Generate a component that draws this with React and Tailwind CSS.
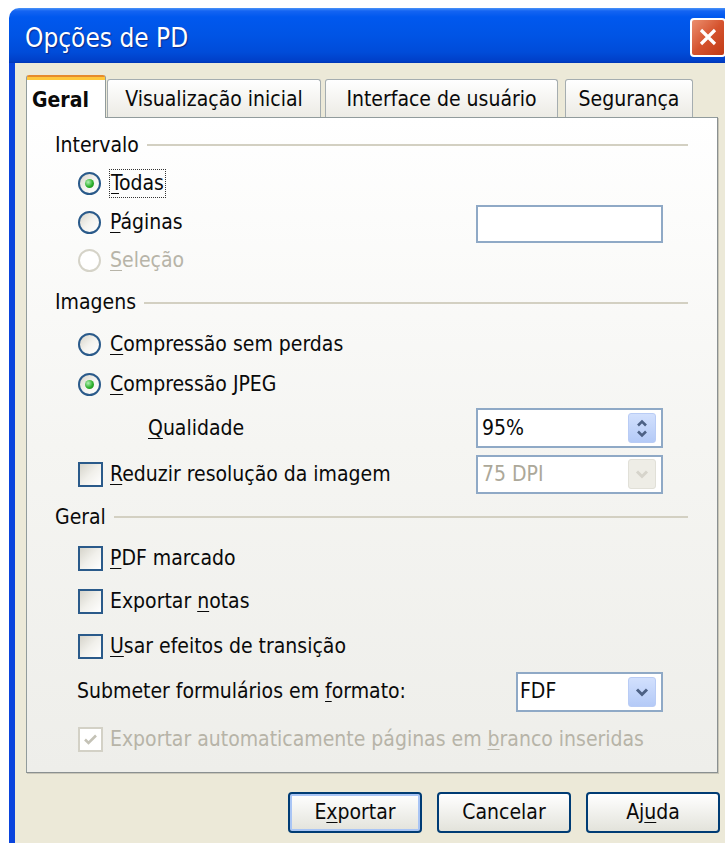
import React from "react";

function Radio({ checked = false, disabled = false }) {
  return (
    <span
      className={
        disabled
          ? "flex h-[23px] w-[23px] shrink-0 items-center justify-center rounded-full border-2 border-[#D5D3C8] bg-white"
          : "flex h-[23px] w-[23px] shrink-0 items-center justify-center rounded-full border-2 border-[#2A5A8A] bg-gradient-to-br from-[#D8D5CA] via-[#F4F3EF] to-white"
      }
    >
      {checked && (
        <span className="h-[9px] w-[9px] rounded-full bg-[radial-gradient(circle_at_35%_35%,#B5F0B5,#2DB12D_55%,#137A13)]" />
      )}
    </span>
  );
}

function Check({ checked = false, disabled = false }) {
  return (
    <span
      className={
        disabled
          ? "flex h-[25px] w-[25px] shrink-0 items-center justify-center border-2 border-[#D3D1C6] bg-white"
          : "flex h-[25px] w-[25px] shrink-0 items-center justify-center border-2 border-[#2A5A8A] bg-gradient-to-br from-[#D6D4CB] via-[#F1F0EB] to-white"
      }
    >
      {checked && (
        <svg width="15" height="15" viewBox="0 0 15 15">
          <path d="M2 7.5 L5.5 11 L13 3.5" fill="none" stroke="#C4C2B6" strokeWidth="2.6" />
        </svg>
      )}
    </span>
  );
}

function Mn({ children }) {
  return <span className="underline decoration-1 underline-offset-[3px]">{children}</span>;
}

function SectionHeader({ label, h }) {
  return (
    <div className={`flex items-center ${h}`}>
      <span>{label}</span>
      <span className="ml-[8px] h-[2px] flex-1 bg-[#D3D0C2]" />
    </div>
  );
}

function ChevronDown({ color }) {
  return (
    <svg width="16" height="12" viewBox="0 0 16 12">
      <path d="M3 3.5 L8 8.5 L13 3.5" fill="none" stroke={color} strokeWidth="3" strokeLinejoin="miter" />
    </svg>
  );
}

function ComboButton({ disabled = false }) {
  return (
    <span
      className={
        disabled
          ? "flex h-[30px] w-[28px] items-center justify-center rounded-[3px] border border-[#E1E0D8] bg-[#EEEDE6]"
          : "flex h-[30px] w-[28px] items-center justify-center rounded-[3px] border border-[#B9CCF5] bg-gradient-to-b from-[#D2E0FD] to-[#B4CAF7]"
      }
    >
      <ChevronDown color={disabled ? "#D6D4CB" : "#4D6185"} />
    </span>
  );
}

function SpinButton() {
  return (
    <span className="flex h-[30px] w-[28px] flex-col items-center justify-center gap-[3px] rounded-[3px] border border-[#B9CCF5] bg-gradient-to-b from-[#D2E0FD] to-[#B4CAF7]">
      <svg width="12" height="8" viewBox="0 0 12 8">
        <path d="M2 6.5 L6 2.5 L10 6.5" fill="none" stroke="#4D6185" strokeWidth="2.6" />
      </svg>
      <svg width="12" height="8" viewBox="0 0 12 8">
        <path d="M2 1.5 L6 5.5 L10 1.5" fill="none" stroke="#4D6185" strokeWidth="2.6" />
      </svg>
    </span>
  );
}

function XpButton({ children, isDefault = false }) {
  return (
    <button
      className={
        isDefault
          ? "flex h-[41px] w-[134px] items-center justify-center rounded-[4px] border-2 border-[#003C74] bg-gradient-to-b from-white to-[#E3E3DB] shadow-[inset_0_0_0_2px_#A9C5F5]"
          : "flex h-[41px] w-[134px] items-center justify-center rounded-[4px] border-2 border-[#003C74] bg-gradient-to-b from-white to-[#E3E3DB]"
      }
    >
      {children}
    </button>
  );
}

function Tab({ label, selected = false, w }) {
  if (selected) {
    return (
      <div
        className={`relative z-10 -mb-px flex h-[43px] ${w} flex-col rounded-t-[3px] border-x border-[#919B9C] bg-white`}
      >
        <span className="h-[2px] rounded-t-[3px] bg-[#E68B2C]" />
        <span className="h-[3px] bg-[#FFC73C]" />
        <span className="flex flex-1 items-center pl-[5px] pt-[2px] font-bold">{label}</span>
      </div>
    );
  }
  return (
    <div
      className={`flex h-[38px] ${w} items-center justify-center rounded-t-[3px] border-x border-t border-[#A5ADB0] bg-gradient-to-b from-white to-[#ECEBE5] pt-[2px]`}
    >
      {label}
    </div>
  );
}

export default function App() {
  return (
    <div className="h-[843px] w-[725px] overflow-hidden bg-white font-['DejaVu_Sans_Condensed','DejaVu_Sans',sans-serif] text-[21px] leading-none text-[#0A0A0A]">
      <div className="ml-[9px] mt-[8px] w-[726px] overflow-hidden rounded-tl-[10px] rounded-tr-[10px]">
        {/* caption bar */}
        <div className="flex h-[55px] items-center bg-[linear-gradient(to_bottom,#4A93F8_0px,#1464F2_3px,#0058EE_9px,#0054E5_28px,#004CD9_44px,#003FC8_53px,#0035B5_55px)] pl-[16px] pr-[9px]">
          <span className="pt-[5px] text-[26px] text-white [text-shadow:1px_1px_1px_#0A2A8C]">Opções de PD</span>
          <span className="ml-auto mt-[3px] flex h-[39px] w-[36px] items-center justify-center rounded-[4px] border-2 border-white bg-gradient-to-br from-[#EB8E6D] via-[#D5532E] to-[#C13A14]">
            <svg width="22" height="22" viewBox="0 0 22 22">
              <path d="M4 4 L18 18 M18 4 L4 18" stroke="white" strokeWidth="3.2" />
            </svg>
          </span>
        </div>

        {/* dialog body */}
        <div className="h-[800px] border-l-[6px] border-[#0A44DD] bg-[#ECE9D8] pl-[11px] pt-[12px]">
          {/* tab strip */}
          <div className="flex items-end">
            <Tab label="Geral" selected w="w-[80px]" />
            <div className="ml-[1px]">
              <Tab label="Visualização inicial" w="w-[214px]" />
            </div>
            <div className="ml-[4px]">
              <Tab label="Interface de usuário" w="w-[233px]" />
            </div>
            <div className="ml-[7px]">
              <Tab label="Segurança" w="w-[128px]" />
            </div>
          </div>

          {/* tab page */}
          <div className="flex h-[656px] w-[692px] flex-col border border-[#919B9C] border-b-[#8A9091] border-r-[#8A9091] bg-gradient-to-b from-white via-[#F5F5F2] to-[#EEEEEA] pl-[28px] pr-[29px] pt-[8px] shadow-[1px_1px_0_#C9C6B8]">
            <SectionHeader label="Intervalo" h="h-[38px]" />

            <div className="flex h-[39px] items-center pl-[23px]">
              <Radio checked />
              <span className="ml-[8px] border border-dotted border-[#333] px-[1px] py-[3px]">
                <Mn>T</Mn>odas
              </span>
            </div>

            <div className="flex h-[38px] items-center pl-[23px]">
              <Radio />
              <span className="ml-[9px]">
                <Mn>P</Mn>áginas
              </span>
              <span className="ml-auto mr-[25px] mt-[4px] h-[38px] w-[187px] border-2 border-[#8FA9C6] bg-white" />
            </div>

            <div className="flex h-[39px] items-center pl-[23px] text-[#B7B4A8]">
              <Radio disabled />
              <span className="ml-[9px]">
                <Mn>S</Mn>eleção
              </span>
            </div>

            <SectionHeader label="Imagens" h="h-[45px]" />

            <div className="flex h-[39px] items-center pl-[23px]">
              <Radio />
              <span className="ml-[9px]">
                <Mn>C</Mn>ompressão sem perdas
              </span>
            </div>

            <div className="flex h-[41px] items-center pl-[23px]">
              <Radio checked />
              <span className="ml-[9px]">
                <Mn>C</Mn>ompressão JPEG
              </span>
            </div>

            <div className="flex h-[46px] items-center pl-[93px]">
              <span>
                <Mn>Q</Mn>ualidade
              </span>
              <span className="ml-auto mr-[25px] flex h-[40px] w-[187px] items-center border-2 border-[#8FA9C6] bg-white pl-[4px] pr-[5px]">
                <span>95%</span>
                <span className="ml-auto">
                  <SpinButton />
                </span>
              </span>
            </div>

            <div className="flex h-[46px] items-center pl-[23px]">
              <Check />
              <span className="ml-[7px]">
                <Mn>R</Mn>eduzir resolução da imagem
              </span>
              <span className="ml-auto mr-[25px] flex h-[39px] w-[187px] items-center border-2 border-[#8FA9C6] bg-white pl-[4px] pr-[5px]">
                <span className="text-[#ACA899]">75 DPI</span>
                <span className="ml-auto">
                  <ComboButton disabled />
                </span>
              </span>
            </div>

            <SectionHeader label="Geral" h="h-[40px]" />

            <div className="flex h-[42px] items-center pl-[23px]">
              <Check />
              <span className="ml-[7px]">
                <Mn>P</Mn>DF marcado
              </span>
            </div>

            <div className="flex h-[45px] items-center pl-[23px]">
              <Check />
              <span className="ml-[7px]">
                Exportar <Mn>n</Mn>otas
              </span>
            </div>

            <div className="flex h-[44px] items-center pl-[23px]">
              <Check />
              <span className="ml-[7px]">
                <Mn>U</Mn>sar efeitos de transição
              </span>
            </div>

            <div className="flex h-[47px] items-center pl-[22px]">
              <span>
                Submeter formulários em <Mn>f</Mn>ormato:
              </span>
              <span className="ml-auto mr-[25px] flex h-[40px] w-[147px] items-center border-2 border-[#8FA9C6] bg-white pl-[2px] pr-[5px]">
                <span>FDF</span>
                <span className="ml-auto">
                  <ComboButton />
                </span>
              </span>
            </div>

            <div className="flex h-[48px] items-center pl-[23px] text-[#B7B4A8]">
              <Check checked disabled />
              <span className="ml-[7px]">
                Exportar automaticamente páginas em <Mn>b</Mn>ranco inseridas
              </span>
            </div>
          </div>

          {/* command buttons */}
          <div className="mt-[19px] flex w-[694px] justify-end gap-[15px]">
            <XpButton isDefault>
              E<Mn>x</Mn>portar
            </XpButton>
            <XpButton>Cancelar</XpButton>
            <XpButton>
              Aj<Mn>u</Mn>da
            </XpButton>
          </div>
        </div>
      </div>
    </div>
  );
}
